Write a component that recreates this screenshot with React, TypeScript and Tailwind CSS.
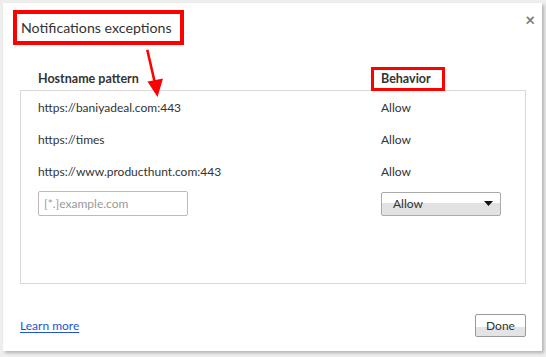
import React from 'react';

const rows = [
  'https://baniyadeal.com:443',
  'https://times',
  'https://www.producthunt.com:443',
];

export default function App() {
  return (
    <div
      className="relative w-[546px] h-[357px] overflow-hidden bg-[#eeeeee] pl-[3px] pt-[3px] text-[#333]"
      style={{ fontFamily: 'Lato, "Open Sans", sans-serif' }}
    >
      {/* Dialog */}
      <div className="relative flex h-[348px] w-[539px] flex-col bg-white shadow-[2px_2px_3px_rgba(0,0,0,0.25)]">
        {/* Close */}
        <span className="absolute right-[7px] top-[8px] text-[17px] font-bold leading-none text-[#7a7a7a]">×</span>

        {/* Title */}
        <div className="pl-[10px] pt-[7px]">
          <div className="inline-block h-[35px] w-[171px] whitespace-nowrap border-4 border-[#ff0000] pl-[4px] text-[14.2px] leading-[27px] text-[#333]">
            Notifications exceptions
          </div>
        </div>

        {/* Column headers */}
        <div className="relative z-10 mt-[22px] flex h-[24px] items-center pl-[35px] text-[12.5px] font-bold">
          <span className="w-[333px]">Hostname pattern</span>
          <span className="flex h-[24px] w-[74px] items-center border-[3px] border-[#ff0000] bg-white pl-[7px]">Behavior</span>
        </div>

        {/* List */}
        <div className="-mt-px ml-[17px] flex h-[194px] w-[506px] flex-col border border-[#d9d9d9] pt-[1px] text-[12px]">
          {rows.map((r) => (
            <div key={r} className="flex h-[32px] items-center pl-[17px]">
              <span className="w-[343px]">{r}</span>
              <span>Allow</span>
            </div>
          ))}
          <div className="mt-[3px] flex items-center pl-[17px]">
            <div className="flex h-[25px] w-[150px] items-center rounded-[2px] border border-[#bbb] pl-[5px] text-[#999]">
              [*.]example.com
            </div>
            <div className="ml-[193px] flex h-[24px] w-[120px] items-center justify-between rounded-[2px] border border-[#aaa] bg-[linear-gradient(#fff_0%,#fff_45%,#e2e2e2_45%,#e2e2e2_100%)] pl-[11px] pr-[7px] text-[#333]">
              <span>Allow</span>
              <svg width="9" height="5" viewBox="0 0 9 5">
                <path d="M0 0h9L4.5 5z" fill="#111" />
              </svg>
            </div>
          </div>
        </div>

        {/* Footer */}
        <div className="mt-[30px] flex items-center justify-between pl-[17px] pr-[16px]">
          <a className="text-[12px] text-[#2255cc] underline underline-offset-2">Learn more</a>
          <button className="h-[23px] w-[51px] rounded-[2px] border border-[#999] bg-[linear-gradient(#fff_0%,#fff_55%,#e4e4e4_55%,#e4e4e4_100%)] text-[12px] text-[#333]">
            Done
          </button>
        </div>
      </div>

      {/* Annotation arrow */}
      <svg className="absolute left-0 top-0" width="546" height="357" viewBox="0 0 546 357">
        <path d="M146 50 L148.5 49.5 L155.5 80 L163 78.5 L157.5 97 L147.5 81.5 L153 80.5 Z" fill="#ff0000" />
      </svg>
    </div>
  );
}
